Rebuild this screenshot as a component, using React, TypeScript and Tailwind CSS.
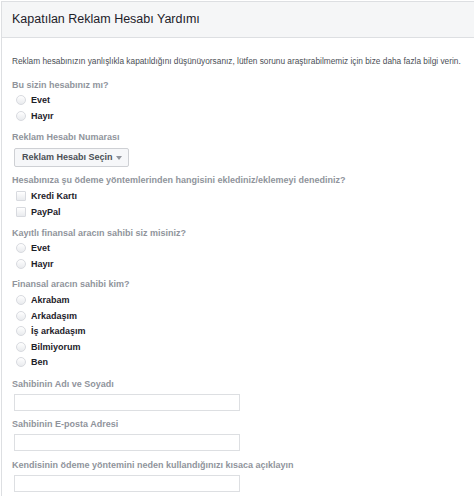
import React from "react";

const font = { fontFamily: '"Liberation Sans", Arial, Helvetica, sans-serif' };

function Radio({ label }: { label: string }) {
  return (
    <div className="flex items-center h-[15.5px]">
      <span className="ml-[4px] mt-[1px] w-[10px] h-[10px] rounded-full border border-[#d8dadf] bg-gradient-to-b from-[#ffffff] to-[#e9ebee]" />
      <span className="ml-[5px] mt-[2px] text-[9px] font-bold text-[#1d2129] leading-none">{label}</span>
    </div>
  );
}

function Check({ label }: { label: string }) {
  return (
    <div className="flex items-center h-[15.5px]">
      <span className="ml-[4px] mt-[1px] w-[10px] h-[10px] rounded-[1px] border border-[#d8dadf] bg-gradient-to-b from-[#ffffff] to-[#e9ebee]" />
      <span className="ml-[5px] mt-[2px] text-[9px] font-bold text-[#1d2129] leading-none">{label}</span>
    </div>
  );
}

function Label({ children, className = "" }: { children: React.ReactNode; className?: string }) {
  return <div className={"text-[9px] font-bold text-[#90949c] pt-[2px] leading-[12px] " + className}>{children}</div>;
}

function Input({ className = "" }: { className?: string }) {
  return <div className={"w-[226px] h-[17px] border border-[#dddfe2] bg-white " + className} />;
}

export default function App() {
  return (
    <div className="w-[474px] h-[496px] overflow-hidden bg-white" style={font}>
      <div className="ml-[1px] mt-[1px] w-[520px] border-l border-t border-[#dddfe2]">
        <div className="h-[36px] bg-[#f5f6f7] border-b border-[#dddfe2] flex items-center pl-[10px]">
          <span className="text-[12.5px] text-[#1d2129] leading-none">Kapatılan Reklam Hesabı Yardımı</span>
        </div>
        <div className="pl-[10px] pt-[16px] pb-[10px]">
          <div className="text-[8.3px] text-[#4b4f56] pt-[1px] leading-[13px] whitespace-nowrap">
            Reklam hesabınızın yanlışlıkla kapatıldığını düşünüyorsanız, lütfen sorunu araştırabilmemiz için bize daha fazla bilgi verin.
          </div>
          <Label className="mt-[9px]">Bu sizin hesabınız mı?</Label>
          <div className="mt-[1px]">
            <Radio label="Evet" />
            <Radio label="Hayır" />
          </div>
          <Label className="mt-[6px]">Reklam Hesabı Numarası</Label>
          <div className="mt-[3px] ml-[2px] inline-flex items-center h-[19px] pl-[7px] pr-[6px] border border-[#ced0d4] rounded-[2px] bg-[#f6f7f9] text-[9px] font-bold text-[#4b4f56] leading-none">
            <span className="mt-[1px]">Reklam Hesabı Seçin</span>
            <svg width="6" height="4" viewBox="0 0 6 4" className="ml-[3px] mt-[1px]">
              <path d="M0 0 L6 0 L3 4 Z" fill="#90949c" />
            </svg>
          </div>
          <Label className="mt-[5px]">Hesabınıza şu ödeme yöntemlerinden hangisini eklediniz/eklemeyi denediniz?</Label>
          <div className="mt-[2px]">
            <Check label="Kredi Kartı" />
            <Check label="PayPal" />
          </div>
          <Label className="mt-[6px]">Kayıtlı finansal aracın sahibi siz misiniz?</Label>
          <div className="mt-[1px]">
            <Radio label="Evet" />
            <Radio label="Hayır" />
          </div>
          <Label className="mt-[5px]">Finansal aracın sahibi kim?</Label>
          <div className="mt-[2px]">
            <Radio label="Akrabam" />
            <Radio label="Arkadaşım" />
            <Radio label="İş arkadaşım" />
            <Radio label="Bilmiyorum" />
            <Radio label="Ben" />
          </div>
          <Label className="mt-[6px]">Sahibinin Adı ve Soyadı</Label>
          <Input className="mt-[4px] ml-[2px]" />
          <Label className="mt-[5px]">Sahibinin E-posta Adresi</Label>
          <Input className="mt-[4px] ml-[2px]" />
          <Label className="mt-[6px]">Kendisinin ödeme yöntemini neden kullandığınızı kısaca açıklayın</Label>
          <Input className="mt-[4px] ml-[2px]" />
        </div>
      </div>
    </div>
  );
}
